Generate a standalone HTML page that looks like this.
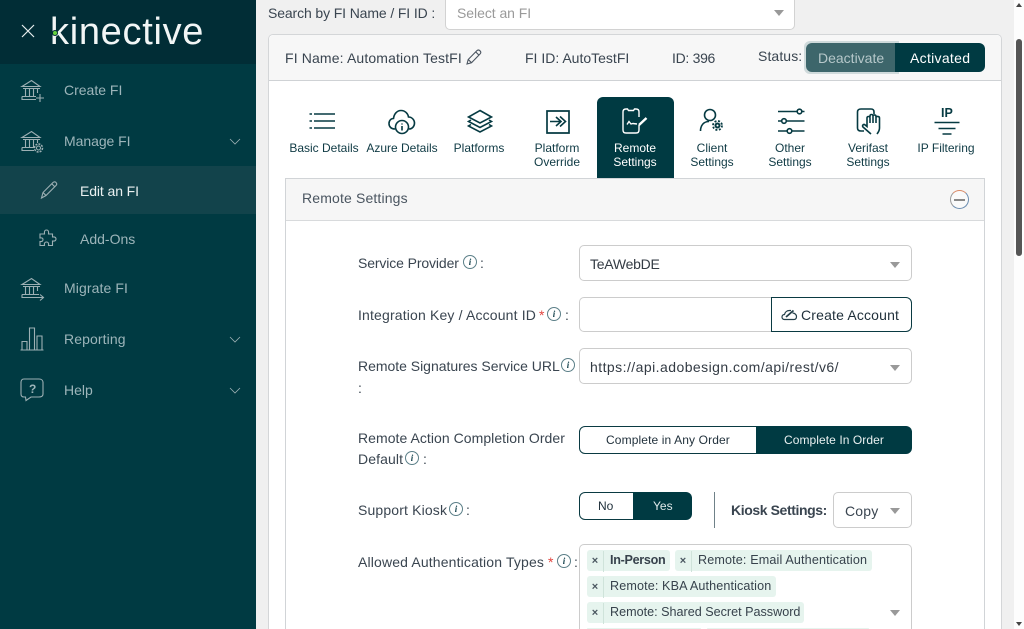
<!DOCTYPE html>
<html lang="en"><head><meta charset="utf-8"><title>Kinective</title>
<style>
*{box-sizing:border-box}
html,body{margin:0;padding:0;width:1024px;height:629px;overflow:hidden;background:#f0f0f0;font-family:"Liberation Sans",Arial,sans-serif;color:#3a4550}
#wrap{position:relative;width:1024px;height:629px;overflow:hidden;background:#f0f0f0}
.t{position:absolute;white-space:nowrap;font-size:14px;line-height:18px}
.b{position:absolute}
svg{position:absolute;overflow:visible}
.nav{color:#9db5ba;font-size:14px}
.tab{font-size:12px;line-height:14px;text-align:center;color:#0f3a44;transform:translateX(-50%)}
.ic{fill:none;stroke:#9db0b4;stroke-width:1.1}
.ti{fill:none;stroke:#063a42;stroke-width:1.6}
.sel{position:absolute;background:#fff;border:1px solid #ccc;border-radius:5px}
.car{position:absolute;width:0;height:0;border-left:5.5px solid transparent;border-right:5.5px solid transparent;border-top:6px solid #999}
.info{position:absolute;width:14px;height:14px;border:1px solid #5b7f88;border-radius:50%;background:#fff;font:italic bold 9px/12px "Liberation Serif",serif;text-align:center;color:#17444e}
.chip{position:absolute;height:21px;background:#e6f4ee;border-radius:3px;font-size:12.6px;line-height:21px;white-space:nowrap;color:#37424c}
.chip i{font-style:normal;display:inline-block;width:17px;text-align:center;border-right:1px solid #cfe3da;margin-right:6px;font-weight:bold;font-size:11px;color:#4a5660}
</style></head><body><div id="wrap">

<!-- sidebar -->
<div class="b" style="left:0;top:0;width:256px;height:629px;background:#003a42"></div>
<div class="b" style="left:0;top:0;width:256px;height:64px;background:#012d36"></div>
<div class="b" style="left:0;top:166px;width:256px;height:48px;background:#12434b"></div>
<svg style="left:21px;top:24px" width="14" height="14"><path d="M1 1L13 13M13 1L1 13" stroke="#e8eeee" stroke-width="1.2" fill="none"/></svg>
<div class="t" style="left:50px;top:12px;font-size:38px;line-height:40px;color:#f2f6f6;letter-spacing:.7px">kinective</div>
<div class="b" style="left:53px;top:31px;width:4px;height:4px;background:#66d13e;border-radius:50%;box-shadow:0 0 0 1px #012d36"></div>

<svg class="ic" style="left:21px;top:79px" width="24" height="24"><path d="M1 7.500L10.500 1.500L19 7.500ZM2 9.500H19M4.500 10V17M8.500 10V17M12.500 10V17M16.500 10V14M1 17.500H15M1 17.500V20.500H15"/><path d="M19 15V23M15 19H23"/></svg>
<div class="t nav" style="left:64px;top:81px">Create FI</div>
<svg class="ic" style="left:21px;top:130px" width="24" height="24"><path d="M1 7.500L10.500 1.500L19 7.500ZM2 9.500H19M4.500 10V17M8.500 10V17M12.500 10V17M16.500 10V13M1 17.500H13M1 17.500V20.500H13"/><circle cx="17.500" cy="18" r="2"/><circle cx="17.500" cy="18" r="4" stroke-dasharray="2 1.100" stroke-width="1.500"/></svg>
<div class="t nav" style="left:64px;top:132px;letter-spacing:-.05px">Manage FI</div>
<svg class="ic" style="left:229px;top:138px" width="12" height="7"><path d="M1 1L6 6L11 1" stroke-width=".8"/></svg>
<svg class="ic" style="left:40px;top:181px" width="18" height="18"><path d="M1.500 17L3 11.500L13 1.500C14 .6 15.300 .6 16 1.500C17 2.500 17 3.500 16 4.500L6 14.500ZM3 11.500L6 14.500M12 3L15 6"/></svg>
<div class="t" style="left:80px;top:182px;color:#eaf0f0;letter-spacing:-.1px">Edit an FI</div>
<svg class="ic" style="left:39px;top:229px" width="18" height="18"><path d="M1 5H5.500C5 2 6 1 7.500 1S10 2 9.500 5H13.500V8C16.500 7.500 17 9 17 10S16.500 12.500 13.500 12V16.500H9.500C10 14 9 13 7.500 13S5 14 5.500 16.500H1V12.500C3.500 13 4 11.500 4 10.500S3.500 8.500 1 9Z"/></svg>
<div class="t nav" style="left:80px;top:230px">Add-Ons</div>
<svg class="ic" style="left:21px;top:277px" width="24" height="24"><path d="M1 7.500L10.500 1.500L19 7.500ZM2 9.500H19M4.500 10V17M8.500 10V17M12.500 10V17M16.500 10V14M1 17.500H18M1 17.500V20.500H22M19 17.500L22.500 20.500L19 23.500"/></svg>
<div class="t nav" style="left:64px;top:279px;letter-spacing:.1px">Migrate FI</div>
<svg class="ic" style="left:20px;top:327px" width="24" height="24"><path d="M.5 23H23.500M2 22.500V14.500H7V22.500M9.500 22.500V1H14.500V22.500M17 22.500V9H22V22.500"/></svg>
<div class="t nav" style="left:64px;top:330px;letter-spacing:.1px">Reporting</div>
<svg class="ic" style="left:229px;top:336px" width="12" height="7"><path d="M1 1L6 6L11 1" stroke-width=".8"/></svg>
<svg class="ic" style="left:20px;top:378px" width="24" height="24"><path d="M4 1H19C21.500 1 23 2.500 23 4.500V16C23 18 21.500 19 19 19H11L6 22.500L5.500 19H4C2 19 1 18 1 16V4.500C1 2.500 2 1 4 1Z"/></svg>
<div class="t" style="left:29px;top:380px;font-size:12px;font-weight:bold;color:#9db5ba">?</div>
<div class="t nav" style="left:64px;top:381px">Help</div>
<svg class="ic" style="left:229px;top:387px" width="12" height="7"><path d="M1 1L6 6L11 1" stroke-width=".8"/></svg>

<!-- top search -->
<div class="t" style="left:268px;top:4px;letter-spacing:-.12px">Search by FI Name / FI ID :</div>
<div class="b" style="left:445px;top:0;width:350px;height:30px;background:#fff;border:1px solid #d2d2d2;border-top:0;border-radius:0 0 5px 5px"></div>
<div class="t" style="left:457px;top:4px;color:#9a9a9a;letter-spacing:-.05px">Select an FI</div>
<div class="car" style="left:774px;top:10px"></div>

<!-- scrollbar -->
<div class="b" style="left:1014px;top:0;width:10px;height:629px;background:#fdfdfd"></div>
<div class="b" style="left:1016px;top:39px;width:6px;height:217px;background:#555;border-radius:3px"></div>
<div class="b" style="left:1016px;top:3px;width:0;height:0;border-left:3px solid transparent;border-right:3px solid transparent;border-bottom:4px solid #444"></div>
<div class="b" style="left:1016px;top:622px;width:0;height:0;border-left:3px solid transparent;border-right:3px solid transparent;border-top:4px solid #444"></div>

<!-- card -->
<div class="b" style="left:268px;top:34px;width:734px;height:595px;background:#fff;border:1px solid #d4d6d8;border-bottom:0;border-radius:5px 5px 0 0"></div>
<div class="b" style="left:269px;top:35px;width:732px;height:46px;background:#f7f7f7;border-bottom:1px solid #cfd2d5;border-radius:5px 5px 0 0"></div>
<div class="t" style="left:285px;top:49px;letter-spacing:.14px">FI Name: Automation TestFI</div>
<svg fill="none" stroke="#4b5560" stroke-width="1.100" style="left:466px;top:49px" width="16" height="16"><path d="M1 15L2.200 10.500L10.800 1.800C11.800 .8 13 .8 14 1.800C15 2.800 15 4 14 5L5.500 13.700ZM2.200 10.500L5.500 13.700M9.800 3L13 6.200"/></svg>
<div class="t" style="left:525px;top:49px">FI ID: AutoTestFI</div>
<div class="t" style="left:672px;top:49px;letter-spacing:-.3px">ID: 396</div>
<div class="t" style="left:758px;top:47px;letter-spacing:.1px">Status:</div>
<div class="b" style="left:804px;top:41px;width:95px;height:33px;background:#cfdadb;border-radius:6px 0 0 6px"></div>
<div class="b" style="left:806px;top:43px;width:90px;height:29px;background:#3d666b;border-radius:6px 0 0 6px"></div>
<div class="b" style="left:895px;top:43px;width:90px;height:29px;background:#003a42;border-radius:0 6px 6px 0"></div>
<div class="t" style="left:818px;top:49px;color:#b6c8ca">Deactivate</div>
<div class="t" style="left:910px;top:49px;color:#fff;letter-spacing:.3px">Activated</div>

<!-- tabs -->
<div class="b" style="left:597px;top:97px;width:77px;height:81px;background:#003a42;border-radius:6px 6px 0 0"></div>

<svg class="ti" style="left:309px;top:112px" width="26" height="18"><path d="M5 2H26M5 9H26M5 16H26M.5 2H3M.5 9H3M.5 16H3"/></svg>
<div class="t tab" style="left:324px;top:141px">Basic Details</div>

<svg class="ti" style="left:388px;top:109px" width="28" height="26"><path d="M7 20C3 20 1 17.500 1 14.500C1 11.500 3 9.500 5.500 9.500C6 5 9 1.500 13 1.500C17 1.500 20 4.500 20.500 8C24 8 26.500 11 26.500 14C26.500 17.500 24 20 21 20"/><circle cx="14" cy="18" r="6.500"/><path d="M14 17V21.500M14 14.500V15.500"/></svg>
<div class="t tab" style="left:402px;top:141px">Azure Details</div>

<svg class="ti" style="left:467px;top:109px" width="26" height="24" stroke-width="1.700"><path d="M13 1.500L24.500 8L13 14L1.500 8ZM4 11L1.500 12.500L13 18.500L24.500 12.500L22 11M4 15.500L1.500 17L13 23L24.500 17L22 15.500"/></svg>
<div class="t tab" style="left:479px;top:141px">Platforms</div>

<svg class="ti" style="left:546px;top:110px" width="24" height="24"><path d="M1 1H23V23H1ZM1 1V23" stroke-width="1.700"/><path d="M4 11.500H14M10 7L15 11.500L10 16M14 6.500L19.500 11.500L14 16.500"/></svg>
<div class="t tab" style="left:557px;top:141px">Platform<br>Override</div>

<svg fill="none" stroke="#fff" stroke-width="1.400" style="left:622px;top:108px" width="27" height="27"><path d="M17 9V4C17 2 16 1 14 1H12.500L11.500 2.500H6.500L5.500 1H4C2 1 1 2 1 4V22C1 24 2 25 4 25H14C16 25 17 24 17 22V17"/><path d="M5 16.500L7 13.500L9 16L11 15.500L15 16"/><path d="M17 17L24.500 10" stroke-width="2.400"/></svg>
<div class="t tab" style="left:635px;top:141px;color:#fff">Remote<br>Settings</div>

<svg class="ti" style="left:699px;top:108px" width="26" height="26"><circle cx="11" cy="7" r="5.500"/><path d="M1.500 23C1.500 17 5 13.500 10 13.500"/><circle cx="18.500" cy="17.500" r="2" stroke-width="2"/><circle cx="18.500" cy="17.500" r="4.500" stroke-width="1.800" stroke-dasharray="2 1.600"/></svg>
<div class="t tab" style="left:712px;top:141px">Client<br>Settings</div>

<svg class="ti" style="left:777px;top:109px" width="28" height="26"><path d="M1 2.500H20M25 2.500H27.500M1 12H4.500M9.500 12H27.500M1 22H10M15 22H27.500"/><circle cx="22.500" cy="2.500" r="2.300"/><circle cx="7" cy="12" r="2.300"/><circle cx="12.500" cy="22" r="2.300"/></svg>
<div class="t tab" style="left:790px;top:141px">Other<br>Settings</div>

<svg class="ti" style="left:856px;top:108px" width="26" height="28"><path d="M8 23H5C2.500 23 1.500 22 1.500 20V4C1.500 2 2.500 1 5 1H15C17 1 18 2 18 4V6"/><path d="M15 26L7 19C6 18 7 16 8.500 16.500L11 18.500V10C11 8 14 8 14 10V15M14 9V8C14 6 17 6 17 8V15M17 8C17 6.500 20 6.500 20 8.500V15M20 9.500C20 8 23.500 8 23.500 10V20C23.500 23 22 24.500 21 26"/></svg>
<div class="t tab" style="left:868px;top:141px">Verifast<br>Settings</div>

<div class="t" style="left:941px;top:106px;font-size:12.500px;line-height:14px;font-weight:bold;color:#063a42">IP</div>
<svg class="ti" style="left:934px;top:121px" width="26" height="14"><path d="M.5 1.500H25.500M4.500 7.500H21.500M8.500 13H17.500"/></svg>
<div class="t tab" style="left:946px;top:141px">IP Filtering</div>

<!-- inner panel -->
<div class="b" style="left:285px;top:178px;width:700px;height:451px;background:#fff;border:1px solid #d1d4d7;border-bottom:0"></div>
<div class="b" style="left:286px;top:179px;width:698px;height:42px;background:#f6f6f6;border-bottom:1px solid #d8dadc"></div>
<div class="t" style="left:302px;top:189px;letter-spacing:.15px;color:#4a5560">Remote Settings</div>
<div class="b" style="left:950px;top:190px;width:19px;height:19px;border-radius:50%;border:1px solid #6c8db0;border-top-color:#d98a68;border-left-color:#9a9a9a;background:#fafafa"></div>
<div class="b" style="left:954px;top:199px;width:11px;height:1.500px;background:#888"></div>

<!-- form rows -->
<div class="t" style="left:358px;top:254px;letter-spacing:-.12px">Service Provider</div>
<div class="info" style="left:463px;top:255px">i</div>
<div class="t" style="left:480px;top:254px">:</div>
<div class="sel" style="left:579px;top:245px;width:333px;height:36px"></div>
<div class="t" style="left:590px;top:255px;color:#333b44;letter-spacing:-.25px">TeAWebDE</div>
<div class="car" style="left:890px;top:262px"></div>

<div class="t" style="left:358px;top:306px;letter-spacing:.16px">Integration Key / Account ID</div>
<div class="t" style="left:539px;top:306px;color:#e2453f">*</div>
<div class="info" style="left:547px;top:307px">i</div>
<div class="t" style="left:565px;top:306px">:</div>
<div class="b" style="left:579px;top:297px;width:194px;height:35px;background:#fff;border:1px solid #ccc;border-right:0;border-radius:5px 0 0 5px"></div>
<div class="b" style="left:771px;top:297px;width:141px;height:35px;background:#fff;border:1px solid #0a3a42;border-radius:0 6px 6px 0"></div>
<svg fill="none" stroke="#25404a" stroke-width="1.200" style="left:781px;top:308px" width="17" height="13"><path d="M3.500 11.500C1.500 11.500 1 10 1 9C1 7.500 2 6.500 3.500 6.500C4 4 6 2.500 8.500 2.500H10M11.500 5C13.500 5 15.500 6.500 15.500 8.500C15.500 10.500 14.500 11.500 13 11.500H3.500"/><path d="M5 9L12.500 2.500" stroke-width="1.800"/></svg>
<div class="t" style="left:801px;top:306px;color:#1f2f3a;letter-spacing:.17px">Create Account</div>

<div class="t" style="left:358px;top:357px;letter-spacing:-.02px">Remote Signatures Service URL</div>
<div class="info" style="left:561px;top:358px">i</div>
<div class="t" style="left:358px;top:379px">:</div>
<div class="sel" style="left:579px;top:348px;width:333px;height:36px"></div>
<div class="t" style="left:590px;top:358px;color:#333b44;letter-spacing:.45px">https://api.adobesign.com/api/rest/v6/</div>
<div class="car" style="left:890px;top:365px"></div>

<div class="t" style="left:358px;top:429px;letter-spacing:.05px">Remote Action Completion Order</div>
<div class="t" style="left:358px;top:450px;letter-spacing:.1px">Default</div>
<div class="info" style="left:405px;top:451px">i</div>
<div class="t" style="left:423px;top:450px">:</div>
<div class="b" style="left:579px;top:426px;width:179px;height:28px;background:#fff;border:1px solid #0a3a42;border-radius:6px 0 0 6px"></div>
<div class="b" style="left:756px;top:426px;width:156px;height:28px;background:#003a42;border-radius:0 6px 6px 0"></div>
<div class="t" style="left:606px;top:431px;font-size:12px;color:#1f2f3a;letter-spacing:.12px">Complete in Any Order</div>
<div class="t" style="left:784px;top:431px;font-size:12px;color:#e9f0f0;letter-spacing:.07px">Complete In Order</div>

<div class="t" style="left:358px;top:501px;letter-spacing:.15px">Support Kiosk</div>
<div class="info" style="left:449px;top:502px">i</div>
<div class="t" style="left:466px;top:501px">:</div>
<div class="b" style="left:579px;top:492px;width:56px;height:28px;background:#fff;border:1px solid #0a3a42;border-radius:6px 0 0 6px"></div>
<div class="b" style="left:633px;top:492px;width:59px;height:28px;background:#003a42;border-radius:0 6px 6px 0"></div>
<div class="t" style="left:598px;top:497px;font-size:12px;color:#1f2f3a">No</div>
<div class="t" style="left:653px;top:497px;font-size:12px;color:#dfe9ea">Yes</div>
<div class="b" style="left:714px;top:492px;width:1px;height:36px;background:#6f8188"></div>
<div class="t" style="left:731px;top:501px;font-weight:bold;font-size:14px;letter-spacing:-.4px">Kiosk Settings:</div>
<div class="sel" style="left:833px;top:492px;width:79px;height:36px"></div>
<div class="t" style="left:845px;top:502px;letter-spacing:.2px">Copy</div>
<div class="car" style="left:890px;top:508px"></div>

<div class="t" style="left:358px;top:553px;letter-spacing:.15px">Allowed Authentication Types</div>
<div class="t" style="left:548px;top:553px;color:#e2453f">*</div>
<div class="info" style="left:557px;top:554px">i</div>
<div class="t" style="left:574px;top:553px">:</div>
<div class="b" style="left:579px;top:544px;width:333px;height:85px;background:#fff;border:1px solid #ccc;border-bottom:0;border-radius:5px 5px 0 0"></div>
<div class="chip" style="left:587px;top:550px;width:83px"><i>×</i><b style="letter-spacing:-.3px">In-Person</b></div>
<div class="chip" style="left:675px;top:550px;width:197px;letter-spacing:.14px"><i>×</i>Remote: Email Authentication</div>
<div class="chip" style="left:587px;top:576px;width:189px;letter-spacing:.12px"><i>×</i>Remote: KBA Authentication</div>
<div class="chip" style="left:587px;top:602px;width:217px"><i>×</i>Remote: Shared Secret Password</div>
<div class="chip" style="left:587px;top:628px;width:114px;height:1px"></div>
<div class="chip" style="left:707px;top:628px;width:162px;height:1px"></div>
<div class="car" style="left:890px;top:610px"></div>
</div></body></html>
